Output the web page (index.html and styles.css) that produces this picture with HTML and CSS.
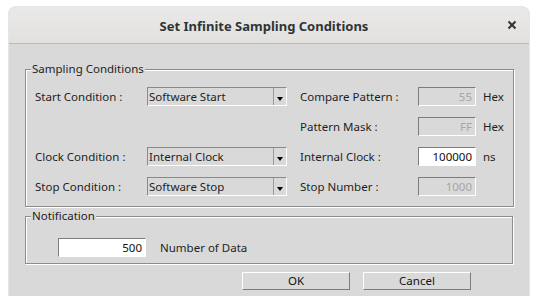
FILE: index.html
```html
<!DOCTYPE html>
<html lang="en">
<head>
  <meta charset="UTF-8" />
  <title>Set Infinite Sampling Conditions</title>
  <link rel="stylesheet" href="styles.css">
</head>
<body>

  <div class="window">
    <div class="titlebar">
      <span></span>
      <span class="title">Set Infinite Sampling Conditions</span>
      <span class="close">
        <svg width="10" height="10" viewBox="0 0 10 10"><path d="M1.5 1.5 L8.5 8.5 M8.5 1.5 L1.5 8.5" stroke="#2e3436" stroke-width="2"/></svg>
      </span>
    </div>

    <div class="content">
      <fieldset class="group">
        <legend>Sampling Conditions</legend>
        <div class="grid">
          <span class="label">Start Condition :</span>
          <div class="combo"><span class="combo-text">Software Start</span><span class="arrow"></span></div>
          <span></span>
          <span class="label">Compare Pattern :</span>
          <div class="field disabled">55</div>
          <span class="unit">Hex</span>

          <span></span>
          <span></span>
          <span></span>
          <span class="label">Pattern Mask :</span>
          <div class="field disabled">FF</div>
          <span class="unit">Hex</span>

          <span class="label">Clock Condition :</span>
          <div class="combo"><span class="combo-text">Internal Clock</span><span class="arrow"></span></div>
          <span></span>
          <span class="label">Internal Clock :</span>
          <div class="field">100000</div>
          <span class="unit">ns</span>

          <span class="label">Stop Condition :</span>
          <div class="combo"><span class="combo-text">Software Stop</span><span class="arrow"></span></div>
          <span></span>
          <span class="label">Stop Number :</span>
          <div class="field disabled">1000</div>
          <span></span>
        </div>
      </fieldset>

      <fieldset class="group notify">
        <legend>Notification</legend>
        <div class="notify-row">
          <div class="field wide">500</div>
          <span class="label">Number of Data</span>
        </div>
      </fieldset>

      <div class="buttons">
        <button class="btn">OK</button>
        <button class="btn">Cancel</button>
      </div>
    </div>
  </div>

</body>
</html>
```

FILE: styles.css
```css
* {
  box-sizing: border-box;
}

body {
  margin: 0;
  background-color: #fff;
  font-family: "Noto Sans", sans-serif;
  font-size: 11.5px;
  color: #1e1e1e;
}

.window {
  margin: 7px 0 0 9px;
  width: 520px;
  background-color: #d9d9d9;
  border-radius: 7px 7px 0 0;
  box-shadow: 0 0 0 1px rgba(0,0,0,0.10);
  overflow: hidden;
}

.titlebar {
  height: 37px;
  display: grid;
  grid-template-columns: 1fr auto 1fr;
  align-items: center;
  background: linear-gradient(#ebe9e7, #e3e1de);
  border-bottom: 1px solid #bdbab6;
}

.title {
  font-size: 13px;
  font-weight: bold;
  color: #2e3436;
  padding-top: 1px;
  margin-right: 10px;
}

.close {
  justify-self: end;
  display: flex;
  padding-right: 12px;
}

.content {
  padding: 0 16px 6px;
}

.group {
  margin: 18px 0 0;
  border: 1px solid #8c8c8c;
  box-shadow: inset 1px 1px 0 #fff, 1px 1px 0 #fff;
  padding: 11px 9px 10px;
}

.group legend {
  font-size: 11.5px;
  line-height: 14px;
  padding: 0 1px;
  margin-left: -4px;
  background-color: #d9d9d9;
}

.grid {
  display: grid;
  grid-template-columns: 112px 140px 13px 118px 58px auto;
  grid-auto-rows: 19px;
  row-gap: 11px;
  align-items: center;
}

.unit {
  margin-left: 7px;
}

.combo {
  height: 19px;
  display: flex;
  border: 1px solid #fff;
  border-top-color: #8a8a8a;
  border-left-color: #8a8a8a;
}

.combo-text {
  flex: 1;
  padding-left: 1px;
  line-height: 17px;
}

.arrow {
  width: 13px;
  border-left: 1px solid #9a9a9a;
  position: relative;
}

.arrow::after {
  content: "";
  position: absolute;
  left: 3px;
  bottom: 4px;
  border-left: 3.5px solid transparent;
  border-right: 3.5px solid transparent;
  border-top: 4px solid #000;
}

.field {
  height: 19px;
  line-height: 17px;
  text-align: right;
  padding-right: 3px;
  background-color: #fff;
  border: 1px solid #fff;
  border-top-color: #7c7c7c;
  border-left-color: #7c7c7c;
  color: #111;
}

.field.disabled {
  background-color: #d9d9d9;
  color: #a6a6a6;
}

.notify {
  margin-top: 2px;
  padding: 15px 9px 6px;
}

.notify-row {
  display: flex;
  align-items: center;
  gap: 14px;
  padding-left: 23px;
}

.field.wide {
  width: 88px;
}

.buttons {
  display: flex;
  justify-content: flex-end;
  gap: 13px;
  margin-top: 8px;
  padding-right: 42px;
}

.btn {
  width: 108px;
  height: 18px;
  padding: 0;
  font-family: "Noto Sans", sans-serif;
  font-size: 11.5px;
  line-height: 14px;
  color: #111;
  background-color: #d9d9d9;
  border: 1px solid #7c7c7c;
  border-top-color: #fff;
  border-left-color: #fff;
}
```
